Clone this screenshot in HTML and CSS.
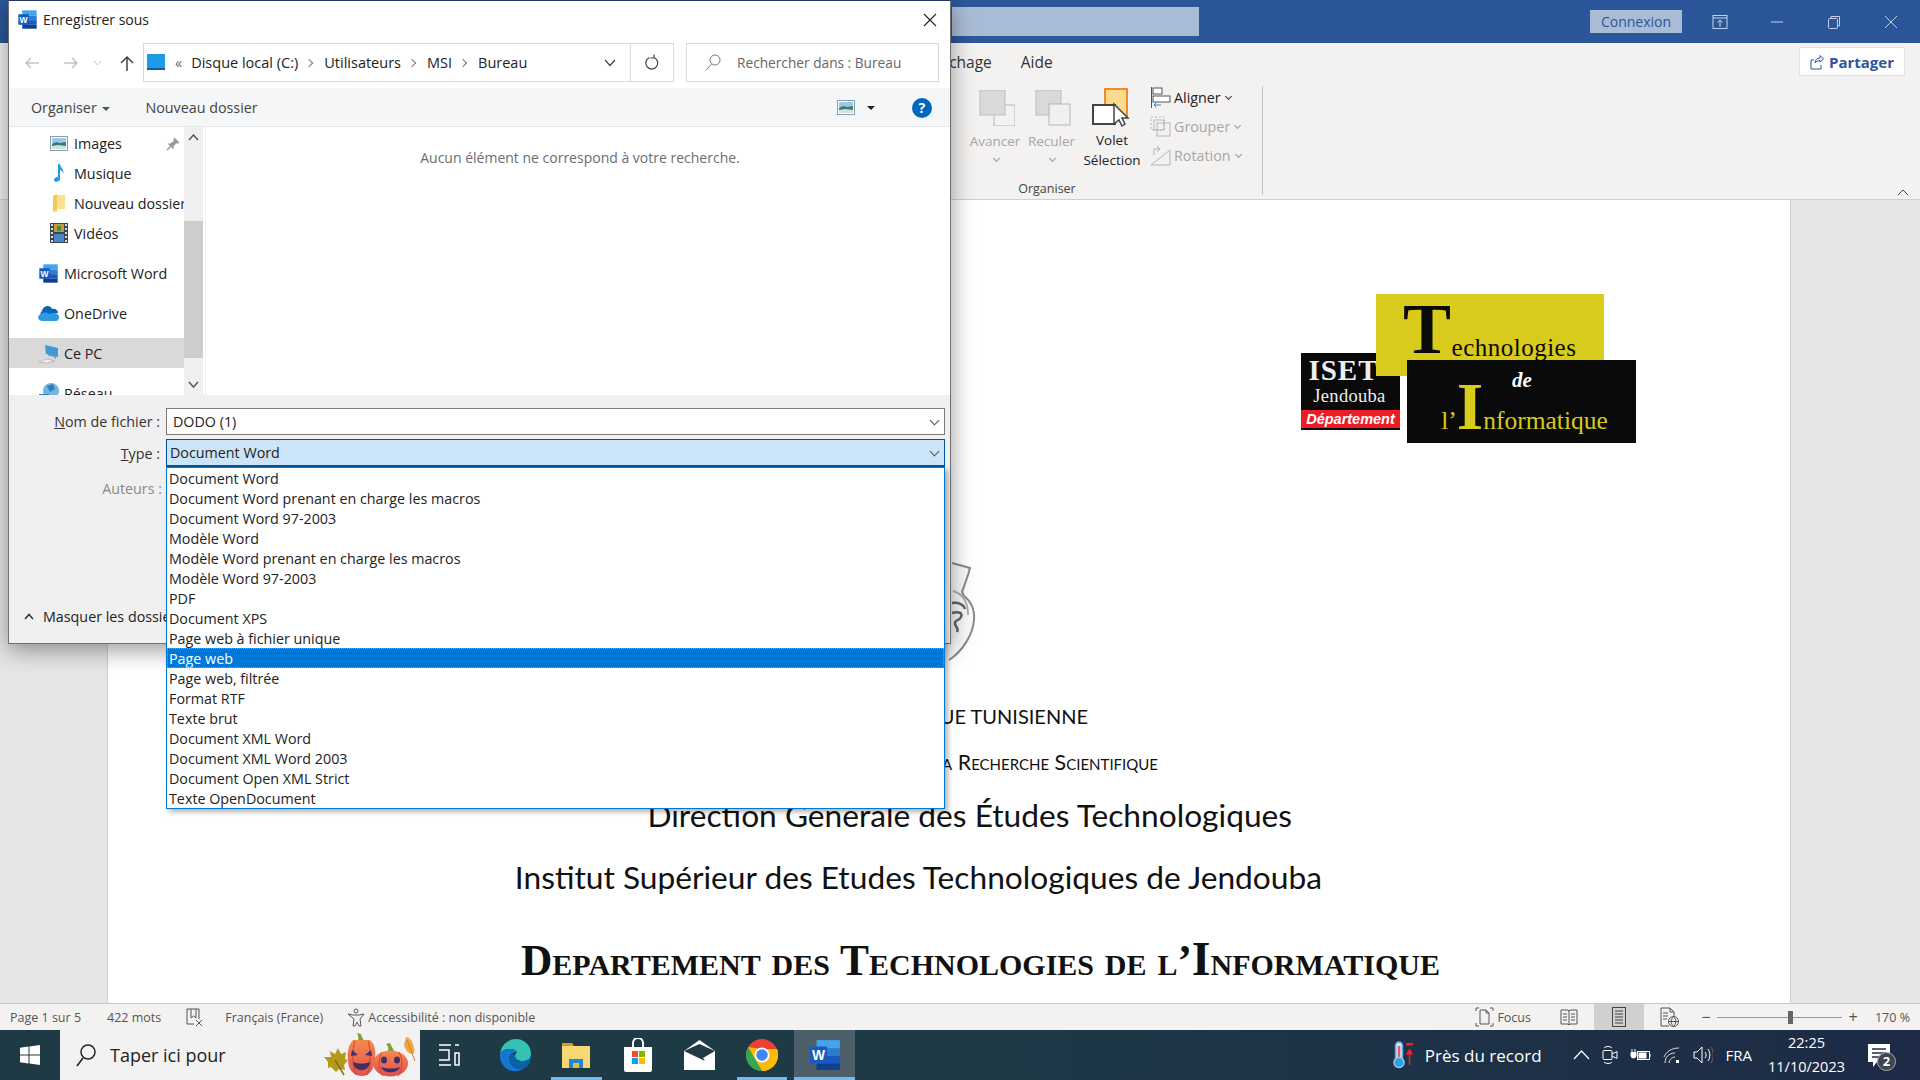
FILE: index.html
```html
<!DOCTYPE html>
<html lang="fr">
<head>
    <meta charset="UTF-8">
    <title>Enregistrer sous</title>
    <link rel="stylesheet" href="styles.css">
</head>
<body>
    <svg class="defs" width="0" height="0">
        <defs>
            <linearGradient id="pumpkin" x1="0" y1="0" x2="0" y2="1">
                <stop offset="0" stop-color="#f58a4e"/>
                <stop offset="1" stop-color="#e2504f"/>
            </linearGradient>
        </defs>
        <symbol id="word" viewBox="0 0 32 32">
            <rect x="8" y="2" width="22" height="8" fill="#41a5ee"/>
            <rect x="8" y="10" width="22" height="7" fill="#2b7cd3"/>
            <rect x="8" y="17" width="22" height="7" fill="#185abd"/>
            <rect x="8" y="24" width="22" height="6" fill="#103f91"/>
            <rect x="2" y="8" width="16" height="16" fill="#185abd"/>
            <text x="10" y="21" text-anchor="middle" font-family="Liberation Sans" font-weight="700" font-size="13" fill="#fff">W</text>
        </symbol>
        <symbol id="picture" viewBox="0 0 18 15">
            <rect x="0.5" y="0.5" width="17" height="14" fill="#fff" stroke="#8a9ba8"/>
            <rect x="2" y="2" width="14" height="6" fill="#9cc8ea"/>
            <path d="M2 8l4-2 4 1 6-1v7H2z" fill="#3d7a6a"/>
            <path d="M2 10l6-1 8 1v3H2z" fill="#cfe0e6"/>
        </symbol>
    </svg>

    <div class="word">
        <header class="titlebar">
            <div class="title-search"></div>
            <button class="login">Connexion</button>
            <div class="win-icons">
                <svg width="16" height="16" viewBox="0 0 16 16" fill="none" stroke="#c5d2e4"><rect x="1" y="1.5" width="14" height="13"/><path d="M1 4h14M8 13V6M5.500 8.500L8 6l2.500 2.500"/></svg>
                <svg width="16" height="16" viewBox="0 0 16 16" stroke="#c5d2e4"><path d="M2 8h12"/></svg>
                <svg width="16" height="16" viewBox="0 0 16 16" fill="none" stroke="#c5d2e4"><rect x="2.500" y="4.500" width="9" height="10" rx="1"/><path d="M5 4V2.500h8.500V12H12"/></svg>
                <svg width="16" height="16" viewBox="0 0 16 16" stroke="#c5d2e4"><path d="M2 2l12 12M14 2L2 14"/></svg>
            </div>
        </header>

        <section class="ribbon">
            <div class="tabs"><span>Affichage</span><span>Aide</span></div>
            <button class="share">
                <svg width="14" height="16" viewBox="0 0 14 16" fill="none" stroke="#2b579a"><path d="M1 6v9h10v-4M1 6h3M5 9c0-3 2-5 5-5V1.500l3.500 3.500L10 8V6.500C8 6.500 6 7.500 5 9z"/></svg>
                Partager
            </button>
            <div class="ribbon-group">
                <div class="ribbon-tools">
                    <div class="tool big disabled">
                        <svg width="36" height="36" viewBox="0 0 36 36"><rect x="15" y="15" width="21" height="21" fill="#f3f2f1" stroke="#b5b5b5"/><rect x="1" y="0" width="25" height="25" fill="#d9d9d9" stroke="#bdbdbd"/></svg>
                        <span>Avancer</span>
                        <i class="chev"></i>
                    </div>
                    <div class="tool big disabled">
                        <svg width="36" height="36" viewBox="0 0 36 36"><rect x="1" y="0" width="25" height="25" fill="#d9d9d9" stroke="#bdbdbd"/><rect x="14" y="14" width="21" height="21" fill="#f0f0f0" stroke="#b5b5b5"/></svg>
                        <span>Reculer</span>
                        <i class="chev"></i>
                    </div>
                    <div class="tool big">
                        <svg width="40" height="40" viewBox="0 0 40 40"><rect x="13" y="1" width="22" height="27" fill="#fbd98d" stroke="#ed8b2f" stroke-width="2"/><rect x="1" y="17" width="22" height="19" fill="#fff" stroke="#444" stroke-width="2"/><path d="M22 16v20l5-4 3 6 3-2-3-6h6z" fill="#fff" stroke="#444" stroke-width="1.500"/></svg>
                        <span>Volet<br>Sélection</span>
                    </div>
                    <div class="tool-stack">
                        <div class="small-tool">
                            <svg width="21" height="21" viewBox="0 0 21 21" fill="none"><path d="M1.500 0v21" stroke="#555"/><rect x="3" y="1" width="9" height="6" stroke="#555" fill="#fff"/><rect x="3" y="9" width="17" height="6" stroke="#555" fill="#fff"/><path d="M11 18H4m2.500-2.500L4 18l2.500 2.500" stroke="#2b88d8"/></svg>
                            Aligner <i class="chev dark"></i>
                        </div>
                        <div class="small-tool disabled">
                            <svg width="21" height="21" viewBox="0 0 21 21" fill="none" stroke="#b5b5b5"><rect x="1" y="1" width="13" height="13" stroke-dasharray="2 2"/><rect x="7" y="7" width="13" height="13"/><rect x="4" y="4" width="10" height="10"/></svg>
                            Grouper <i class="chev"></i>
                        </div>
                        <div class="small-tool disabled">
                            <svg width="21" height="21" viewBox="0 0 21 21" fill="none" stroke="#b5b5b5"><path d="M1 20h19V5zM4 10V4h6M7 1L10 4 7 7"/></svg>
                            Rotation <i class="chev"></i>
                        </div>
                    </div>
                </div>
                <div class="group-name">Organiser</div>
            </div>
            <svg class="collapse" width="12" height="8" viewBox="0 0 12 8" fill="none" stroke="#444"><path d="M1 7l5-5 5 5"/></svg>
        </section>

        <main class="doc-area">
            <article class="page">
                <div class="logo">
                    <div class="logo-iset">
                        <b>ISET</b>
                        <span>Jendouba</span>
                        <em>Département</em>
                    </div>
                    <div class="logo-tech"><b>T</b>echnologies</div>
                    <div class="logo-info">
                        <em>de</em>
                        <p>l’<b>I</b>nformatique</p>
                    </div>
                </div>
                <svg class="emblem" width="60" height="110" viewBox="0 0 60 110" fill="none" stroke="#8a8a8a" stroke-width="2">
                    <path d="M29 8l18 5-2 7-6 17 2 4c7 5 11 14 10 24-1 14-11 31-25 40" fill="#fafafa"/>
                    <path d="M29 48c7-1 12 2 13 6M29 58c7-2 11 0 9 4s-7 3-6 7 4 4 2 8" stroke="#666" stroke-width="2.500"/>
                    <path d="M30 36c10 3 15 12 15 24" stroke="#b0b0b0"/>
                </svg>
                <p class="line line-republic">RÉPUBLIQUE TUNISIENNE</p>
                <p class="line line-ministry">Ministère de l’Enseignement Supérieur et de la Recherche Scientifique</p>
                <p class="line line-direction">Direction Générale des Études Technologiques</p>
                <p class="line line-institut">Institut Supérieur des Etudes Technologiques de Jendouba</p>
                <p class="line line-dept">Departement des Technologies de l’<span>I</span>nformatique</p>
            </article>
        </main>

        <footer class="statusbar">
            <div class="status-left">
                <span>Page 1 sur 5</span>
                <span>422 mots</span>
                <svg width="19" height="19" viewBox="0 0 19 19" fill="none" stroke="#555"><path d="M2 1h12v10M2 1v15h7M6 1v9l2.500-2L11 10V1M11 12l6 6M17 12l-6 6"/></svg>
                <span class="lang">Français (France)</span>
                <span class="access">
                    <svg width="19" height="19" viewBox="0 0 19 19" fill="none" stroke="#555"><circle cx="9" cy="3" r="2"/><path d="M1 6l5 1h6l5-1-4 5 1 7h-2l-2-4-2 4H6l1-7z"/></svg>
                    Accessibilité : non disponible
                </span>
            </div>
            <div class="status-right">
                <span class="focus">
                    <svg width="19" height="20" viewBox="0 0 19 20" fill="none" stroke="#555"><path d="M1 4V1h3M15 1h3v3M1 16v3h3M15 19h3v-3M5 3h6l3 3v11H5zM11 3v3h3"/></svg>
                    Focus
                </span>
                <span class="view">
                    <svg width="18" height="18" viewBox="0 0 18 18" fill="none" stroke="#555"><path d="M1 2h7l1 1 1-1h7v14h-7l-1 1-1-1H1zM9 3v14M3 6h4M3 9h4M3 12h4M11 6h4M11 9h4M11 12h4"/></svg>
                </span>
                <span class="view view-on">
                    <svg width="14" height="20" viewBox="0 0 14 20" fill="none" stroke="#444"><rect x="0.500" y="0.500" width="13" height="19"/><path d="M3 4h8M3 7h8M3 10h8M3 13h8M3 16h8"/></svg>
                </span>
                <span class="view">
                    <svg width="20" height="20" viewBox="0 0 20 20" fill="none" stroke="#555"><path d="M10 19H2V1h9l4 4v5M11 1v4h4M4 6h5M4 9h5M4 12h4"/><circle cx="14.500" cy="14.500" r="5"/><path d="M9.500 14.500h10M14.500 9.500c-3 3-3 7 0 10M14.500 9.500c3 3 3 7 0 10"/></svg>
                </span>
                <div class="zoom">
                    <span class="zoom-sign">−</span>
                    <div class="zoom-track"><i></i></div>
                    <span class="zoom-sign">+</span>
                    <span class="zoom-value">170 %</span>
                </div>
            </div>
        </footer>

        <nav class="taskbar">
            <svg class="start" width="20" height="20" viewBox="0 0 20 20" fill="#fff"><path d="M0 2.800l8.500-1.200v8H0zM9.500 1.400L20 0v9.600H9.500zM0 10.500h8.500v8L0 17.300zM9.500 10.500H20V20L9.500 18.600z"/></svg>
            <div class="task-search">
                <svg width="22" height="24" viewBox="0 0 22 24" fill="none" stroke="#222" stroke-width="1.500"><circle cx="13" cy="9" r="7"/><path d="M8 15l-6 8"/></svg>
                <span>Taper ici pour</span>
                <svg class="pumpkins" width="96" height="46" viewBox="0 0 96 46">
                    <path d="M2 25l7 0-1-6 5 3 3-6 3 6 5-2-1 7 3 1-4 5 1 5-6-1-3 3-5-5-3 1 0-6z" fill="#b39a18"/>
                    <path d="M13 28l9 15" stroke="#8a6d20" stroke-width="1.500"/>
                    <path d="M84 5c4 0 7 5 8 11 1 3 0 6-2 6-3 0-7-4-8-9z" fill="#efa63f"/>
                    <path d="M85 8l8 21" stroke="#c9852f"/>
                    <path d="M36 9c1-3 0-6-1-8l4 1c0 2 2 4 3 7z" fill="#7e9f3a"/>
                    <path d="M31 8h17c5 4 6 11 5 20-1 10-6 16-13 16-8 0-14-6-14-16-1-9 1-16 5-20z" fill="url(#pumpkin)"/>
                    <path d="M33 9c-3 9-3 24 1 34M46 9c3 9 3 24-1 34" stroke="#c9482f" fill="none"/>
                    <path d="M30 18l6 5-7 1zM49 18l-6 5 7 1z" fill="#40306a"/>
                    <path d="M31 30c6 2 11 2 17 0-1 11-16 11-17 0z" fill="#40306a"/>
                    <path d="M66 19c1-3 0-5-2-7l4-1c1 3 3 5 4 8z" fill="#7e9f3a"/>
                    <ellipse cx="68.500" cy="31.500" rx="17.500" ry="13" fill="url(#pumpkin)"/>
                    <path d="M60 20c-4 7-4 17 1 24M77 20c4 7 4 17-1 24" stroke="#c9482f" fill="none"/>
                    <ellipse cx="62" cy="28" rx="3" ry="3.500" fill="#40306a"/>
                    <ellipse cx="75" cy="28" rx="3" ry="3.500" fill="#40306a"/>
                    <path d="M59 35c6 2 13 2 19 0-2 7-17 7-19 0z" fill="#40306a"/>
                </svg>
            </div>
            <div class="task-apps">
                <span class="app">
                    <svg width="22" height="24" viewBox="0 0 22 24" fill="none" stroke="#fff" stroke-width="1.500"><path d="M1 2h12M1 22h12M1 7h10v10H1M17 2v0h4M17 10h4v12h-4z"/></svg>
                </span>
                <span class="app">
                    <svg width="32" height="32" viewBox="0 0 32 32">
                        <path d="M1 15C2 6 9 0 17 0c9 0 15 7 15 15 0 5-4 7-8 7-5 0-8-2-8-5 0-2 1-3 2-4-1-2-4-3-7-3-5 0-9 2-10 5z" fill="#35c1b5"/>
                        <path d="M1 15c1-3 5-5 10-5 3 0 6 1 7 3-6 0-9 5-7 10 2 5 7 8 13 7-3 2-6 2-9 2C7 32 0 24 1 15z" fill="#1378cf"/>
                        <path d="M16 17c0 3 3 5 8 5 4 0 8-2 8-7 1 8-3 13-8 15-6 1-11-2-13-7-1-3 0-7 3-9-1 1 2 1 2 3z" fill="#0d5fa8"/>
                    </svg>
                </span>
                <span class="app active">
                    <svg width="30" height="30" viewBox="0 0 30 30">
                        <path d="M1 3h10l2 3H1z" fill="#d79c1e"/>
                        <rect x="1" y="6" width="28" height="22" fill="#f8d775"/>
                        <path d="M8 28v-9h14v9h-4v-5h-6v5z" fill="#1f88d9"/>
                        <rect x="12" y="23" width="6" height="5" fill="#e9b949"/>
                    </svg>
                </span>
                <span class="app">
                    <svg width="30" height="34" viewBox="0 0 30 34">
                        <path d="M10 9V5a5 5 0 0 1 10 0v4" fill="none" stroke="#fff" stroke-width="2"/>
                        <path d="M1 9h28v23a2 2 0 0 1-2 2H3a2 2 0 0 1-2-2z" fill="#fff"/>
                        <rect x="9" y="13" width="6" height="6" fill="#f25022"/>
                        <rect x="16" y="13" width="6" height="6" fill="#7fba00"/>
                        <rect x="9" y="20" width="6" height="6" fill="#00a4ef"/>
                        <rect x="16" y="20" width="6" height="6" fill="#ffb900"/>
                    </svg>
                </span>
                <span class="app">
                    <svg width="31" height="30" viewBox="0 0 31 30">
                        <path d="M0 11L15.500 0 31 11v19H0z" fill="#fff"/>
                        <path d="M0 11l21 10-2-3 12-7-15.500-7z" fill="#233a44"/>
                        <path d="M21 20l10 9V11z" fill="#fff"/>
                    </svg>
                </span>
                <span class="app active">
                    <svg width="32" height="32" viewBox="0 0 32 32">
                        <circle cx="16" cy="16" r="16" fill="#ea4335"/>
                        <path d="M2 8l8 14 6 10c9 0 16-7 16-16 0-2-.4-4-1-6H16z" fill="#fbbc05"/>
                        <path d="M2.200 8L10 22l6 10C7 32 0 25 0 16c0-3 .8-5.700 2.200-8z" fill="#34a853"/>
                        <path d="M31 10H16l6 12-6 10c9 0 16-7 16-16 0-2-.4-4-1-6z" fill="#fbbc05"/>
                        <circle cx="16" cy="16" r="7.500" fill="#fff"/>
                        <circle cx="16" cy="16" r="5.800" fill="#4285f4"/>
                    </svg>
                </span>
                <span class="app active app-word">
                    <svg width="34" height="34"><use href="#word"/></svg>
                </span>
            </div>
            <div class="tray">
                <svg width="20" height="28" viewBox="0 0 20 28">
                    <rect x="2.500" y="1" width="7" height="20" rx="3.500" fill="#cfe4f7" stroke="#5ba8e6" stroke-width="1.500"/>
                    <path d="M6 5v15" stroke="#e0645a" stroke-width="2.500"/>
                    <circle cx="6" cy="21.500" r="5" fill="#27a0e8" stroke="#93c9f0" stroke-width="1.500"/>
                    <path d="M13 2h7v2.500h-7z" fill="#e8232a"/>
                    <path d="M16.500 24V11M14 13l2.500-4 2.500 4z" stroke="#e8232a" stroke-width="1.500" fill="#e8232a"/>
                </svg>
                <span class="record">Près du record</span>
                <svg class="tray-up" width="17" height="10" viewBox="0 0 17 10" fill="none" stroke="#fff" stroke-width="1.200"><path d="M1 9l7.500-8L16 9"/></svg>
                <svg width="16" height="20" viewBox="0 0 16 20" fill="none" stroke="#fff"><path d="M2 3c2-2 6-2 8 0M2 17c2 2 6 2 8 0"/><rect x="1" y="5.500" width="9" height="9" rx="1"/><path d="M10 9l5-2.500v7L10 11"/></svg>
                <svg width="21" height="12" viewBox="0 0 21 12" fill="none" stroke="#fff"><rect x="7.500" y="2.500" width="12" height="8"/><rect x="9" y="4" width="7" height="5" fill="#fff"/><path d="M20 5v3"/><path d="M1 3.500h5v3a2.500 2.500 0 0 1-5 0zM2 3V0M5 3V0" fill="#fff"/></svg>
                <svg width="18" height="18" viewBox="0 0 18 18" fill="none" stroke="#ddd"><rect x="13" y="14" width="3" height="3" fill="#fff" stroke="none"/><path d="M2 17c0-6 4-10 10-10M6 17c0-3 3-6 6-6M1 11c2-5 7-9 15-9"/></svg>
                <svg width="20" height="20" viewBox="0 0 20 20" fill="none" stroke="#fff"><path d="M1 7h3l5-5v16l-5-5H1zM12 7c1.500 2 1.500 4 0 6M15 4c2.500 4 2.500 8 0 12"/><path d="M18 2c3 5 3 11 0 16" stroke="#667"/></svg>
                <span class="lang-code">FRA</span>
                <div class="clock"><span>22:25</span><span>11/10/2023</span></div>
                <div class="notif">
                    <svg width="22" height="24" viewBox="0 0 22 24"><path d="M0 1h22v18H9l-4 5v-5H0z" fill="#fff"/><path d="M4 6h14M4 10h14M4 14h14" stroke="#1e2c45" stroke-width="1.500"/></svg>
                    <span class="badge">2</span>
                </div>
            </div>
        </nav>
    </div>

    <div class="dialog">
        <div class="dlg-title">
            <svg width="21" height="21"><use href="#word"/></svg>
            <span>Enregistrer sous</span>
            <svg class="dlg-close" width="14" height="14" viewBox="0 0 14 14" stroke="#222" stroke-width="1.100"><path d="M1 1l12 12M13 1L1 13"/></svg>
        </div>
        <div class="dlg-address">
            <div class="dlg-nav">
                <svg width="16" height="14" viewBox="0 0 16 14" fill="none" stroke="#c4c4c4" stroke-width="1.500"><path d="M15 7H2M7 2L2 7l5 5"/></svg>
                <svg width="16" height="14" viewBox="0 0 16 14" fill="none" stroke="#c4c4c4" stroke-width="1.500"><path d="M1 7h13M9 2l5 5-5 5"/></svg>
                <svg width="9" height="6" viewBox="0 0 9 6" fill="none" stroke="#c4c4c4"><path d="M1 1l3.500 4L8 1"/></svg>
                <svg width="14" height="16" viewBox="0 0 14 16" fill="none" stroke="#444" stroke-width="1.500"><path d="M7 16V2M1 8l6-6 6 6"/></svg>
            </div>
            <div class="crumbs">
                <svg width="19" height="19" viewBox="0 0 19 19"><rect x="0" y="1" width="18" height="14" fill="#1e9ae6"/><rect x="0" y="15" width="18" height="2" fill="#0b5ea8"/></svg>
                <span class="crumb-more">«</span>
                <span>Disque local (C:)</span><i class="sep"></i>
                <span>Utilisateurs</span><i class="sep"></i>
                <span>MSI</span><i class="sep"></i>
                <span>Bureau</span>
                <svg class="crumb-chev" width="12" height="8" viewBox="0 0 12 8" fill="none" stroke="#444" stroke-width="1.200"><path d="M1 1l5 5.500L11 1"/></svg>
                <div class="crumb-refresh">
                    <svg width="16" height="17" viewBox="0 0 16 17" fill="none" stroke="#444" stroke-width="1.200"><path d="M10 3.500a6 6 0 1 1-4.500 0M10 .5v3.500h-3.500" /></svg>
                </div>
            </div>
            <div class="dlg-search">
                <svg width="16" height="17" viewBox="0 0 16 17" fill="none" stroke="#777"><circle cx="10" cy="6" r="5"/><path d="M6.500 10L1 16"/></svg>
                <span>Rechercher dans : Bureau</span>
            </div>
        </div>
        <div class="dlg-toolbar">
            <span class="tb-item">Organiser <i class="caret"></i></span>
            <span class="tb-item">Nouveau dossier</span>
            <span class="tb-view">
                <svg width="18" height="15"><use href="#picture"/></svg>
                <i class="caret dark"></i>
            </span>
            <span class="help">?</span>
        </div>
        <div class="dlg-body">
            <div class="nav-pane">
                <ul class="nav-list">
                    <li class="sub">
                        <svg width="18" height="15"><use href="#picture"/></svg>
                        Images
                        <svg class="pin" width="14" height="14" viewBox="0 0 14 14" fill="#999"><path d="M8.500 .5l5 5-1.500 1h-2L7.500 9.500v3L1.500 6.500h3L7.500 4V2z"/><path d="M4.500 9.500L1 13" stroke="#999" stroke-width="1.500"/></svg>
                    </li>
                    <li class="sub">
                        <svg width="18" height="20" viewBox="0 0 18 20"><path d="M8 1h2c0 4 5 5 3 10 0-3-2-4-3-4v9c0 3-6 4-6 1 0-2 2-3 4-3z" fill="#1e9ae6"/></svg>
                        Musique
                    </li>
                    <li class="sub">
                        <svg width="18" height="20" viewBox="0 0 18 20"><path d="M5 2h10v14H5z" fill="#fbe08e"/><path d="M3 3l4-2v17l-4 1z" fill="#f3c95c"/></svg>
                        Nouveau dossier
                    </li>
                    <li class="sub">
                        <svg width="18" height="20" viewBox="0 0 18 20"><rect width="18" height="20" fill="#3a4650"/><rect x="4" y="1" width="10" height="8" fill="#c59a3a"/><rect x="7" y="3" width="4" height="5" fill="#4a8c46"/><rect x="4" y="11" width="10" height="8" fill="#4b86c9"/><path d="M1 2h2M1 6h2M1 10h2M1 14h2M1 18h2M15 2h2M15 6h2M15 10h2M15 14h2M15 18h2" stroke="#ddd" stroke-width="2"/></svg>
                        Vidéos
                    </li>
                    <li class="top gap">
                        <svg width="21" height="21"><use href="#word"/></svg>
                        Microsoft Word
                    </li>
                    <li class="top gap">
                        <svg width="21" height="16" viewBox="0 0 21 16"><path d="M3 11a4 4 0 0 1 1-5c1-5 8-7 10-2 3-1 6 1 6 4z" fill="#0a64b8"/><path d="M4 16c-5 0-5-6-1-7 2-2 6-2 8 0 3-2 10-1 10 3 0 2-1 4-3 4z" fill="#2c9be0"/></svg>
                        OneDrive
                    </li>
                    <li class="top gap selected">
                        <svg width="21" height="24" viewBox="0 0 21 24"><path d="M7 4l13 3v9L8 13z" fill="#3a9bdc"/><path d="M10 14l8 2-1 2" stroke="#7a8a96" fill="none"/><path d="M1 21l8-3 8 2-8 2z" fill="#eee" stroke="#aaa" stroke-width=".7"/></svg>
                        Ce PC
                    </li>
                    <li class="top gap">
                        <svg width="21" height="24" viewBox="0 0 21 24"><circle cx="13" cy="10" r="8" fill="#6fb4e3"/><path d="M9 5l6-2 2 5-5 3zM1 13h10v9H1z" fill="#2e7fc0"/></svg>
                        Réseau
                    </li>
                </ul>
                <div class="nav-scroll">
                    <svg width="11" height="7" viewBox="0 0 11 7" fill="none" stroke="#555" stroke-width="1.500"><path d="M1 6l4.500-5L10 6"/></svg>
                    <div class="nav-thumb"></div>
                    <svg width="11" height="7" viewBox="0 0 11 7" fill="none" stroke="#555" stroke-width="1.500"><path d="M1 1l4.500 5L10 1"/></svg>
                </div>
            </div>
            <div class="results">Aucun élément ne correspond à votre recherche.</div>
        </div>
        <div class="dlg-form">
            <div class="form-row">
                <label><u>N</u>om de fichier :</label>
                <div class="field">DODO (1)<i class="chev"></i></div>
            </div>
            <div class="form-row row-type">
                <label><u>T</u>ype :</label>
                <div class="field field-open">Document Word<i class="chev"></i></div>
            </div>
            <div class="form-row row-author">
                <label class="muted">Auteurs :</label>
            </div>
            <div class="hide-folders">
                <svg width="10" height="7" viewBox="0 0 10 7" fill="none" stroke="#333" stroke-width="1.500"><path d="M1 6l4-4.500L9 6"/></svg>
                Masquer les dossiers
            </div>
        </div>
        <ul class="type-menu">
            <li>Document Word</li>
            <li>Document Word prenant en charge les macros</li>
            <li>Document Word 97-2003</li>
            <li>Modèle Word</li>
            <li>Modèle Word prenant en charge les macros</li>
            <li>Modèle Word 97-2003</li>
            <li>PDF</li>
            <li>Document XPS</li>
            <li>Page web à fichier unique</li>
            <li class="current">Page web</li>
            <li>Page web, filtrée</li>
            <li>Format RTF</li>
            <li>Texte brut</li>
            <li>Document XML Word</li>
            <li>Document XML Word 2003</li>
            <li>Document Open XML Strict</li>
            <li>Texte OpenDocument</li>
        </ul>
    </div>
</body>
</html>
```

FILE: styles.css
```css
:root {
    --word-blue: #2b579a;
    --ribbon: #f3f2f1;
    --text: #222;
    --ui-font: "Open Sans", "Noto Sans", sans-serif;
}

* {
    margin: 0;
    padding: 0;
    box-sizing: border-box;
}

body {
    width: 1920px;
    height: 1080px;
    overflow: hidden;
    position: relative;
    font-family: var(--ui-font);
    font-size: 14.300px;
    color: var(--text);
}

ul {
    list-style: none;
}

button {
    font: inherit;
    border: none;
}

.defs {
    position: absolute;
}

.word {
    display: flex;
    flex-direction: column;
    height: 1080px;
}

/* title bar */
.titlebar {
    height: 43px;
    flex: none;
    background: var(--word-blue);
    display: flex;
    align-items: center;
    justify-content: space-between;
    padding: 0 21px 0 952px;
}

.title-search {
    width: 247px;
    height: 29px;
    margin-top: -1px;
    background: #a9bcd6;
}

.login {
    width: 92px;
    height: 23px;
    margin-left: 391px;
    background: #a9bcd6;
    color: var(--word-blue);
    font-size: 14px;
}

.win-icons {
    display: flex;
    gap: 41px;
    margin-left: 30px;
}

/* ribbon */
.ribbon {
    height: 157px;
    flex: none;
    position: relative;
    background: var(--ribbon);
    border-bottom: 1px solid #d2d0ce;
}

.tabs {
    position: absolute;
    left: 925px;
    top: 8px;
    display: flex;
    gap: 29px;
    font-size: 15.500px;
    color: #333;
}

.share {
    position: absolute;
    left: 1799px;
    top: 4px;
    width: 106px;
    height: 29px;
    display: flex;
    align-items: center;
    justify-content: center;
    gap: 5px;
    background: #fff;
    border: 1px solid #e1dfdd;
    border-radius: 2px;
    color: var(--word-blue);
    font-weight: 700;
    font-size: 15px;
}

.ribbon-group {
    position: absolute;
    left: 965px;
    top: 43px;
    width: 298px;
    height: 109px;
    border-right: 1px solid #c8c6c4;
    display: flex;
    flex-direction: column;
}

.ribbon-tools {
    display: flex;
    height: 94px;
}

.tool {
    display: flex;
    flex-direction: column;
    align-items: center;
    font-size: 13.500px;
    line-height: 20px;
    text-align: center;
    white-space: nowrap;
}

.tool.big {
    width: 60px;
    padding-top: 4px;
}

.tool.big svg {
    margin-bottom: 5px;
    margin-left: 3px;
    flex: none;
}

.tool:nth-child(2) {
    width: 53px;
}

.tool:nth-child(3) {
    width: 66px;
    margin-left: 1px;
    margin-right: 3px;
    padding-top: 2px;
}

.tool:nth-child(3) svg {
    margin-bottom: 2px;
    margin-left: 0;
}

.disabled {
    color: #a6a6a6;
}

.tool-stack {
    display: flex;
    flex-direction: column;
    gap: 8px;
    margin-left: 2px;
    padding-top: 1px;
}

.small-tool {
    height: 21px;
    display: flex;
    align-items: center;
    gap: 3px;
    font-size: 14.300px;
    white-space: nowrap;
}

.chev {
    display: inline-block;
    width: 5px;
    height: 5px;
    margin: 0 0 3px 2px;
    border-right: 1px solid #999;
    border-bottom: 1px solid #999;
    transform: rotate(45deg);
}

.chev.dark {
    border-color: #333;
}

.tool .chev {
    margin-top: 5px;
}

.group-name {
    width: 164px;
    margin-top: 10px;
    text-align: center;
    font-size: 12.500px;
    color: #444;
}

.collapse {
    position: absolute;
    left: 1897px;
    top: 145px;
}

/* document */
.doc-area {
    flex: 1;
    min-height: 0;
    background: #e6e6e6;
    padding-left: 107px;
    padding-right: 129px;
    overflow: hidden;
}

.page {
    position: relative;
    height: 100%;
    background: #fff;
    border-left: 1px solid #cfcfcf;
    border-right: 1px solid #cfcfcf;
    padding-top: 502px;
    font-family: Lato, "Open Sans", sans-serif;
    color: #111;
    white-space: nowrap;
}

.line {
    text-align: right;
}

.line-republic {
    font-size: 20px;
    line-height: 28px;
    padding-right: 702px;
}

.line-ministry {
    margin-top: 18px;
    font-size: 21.400px;
    line-height: 28px;
    font-variant: small-caps;
    padding-right: 632px;
}

.line-direction {
    margin-top: 20px;
    font-size: 31.700px;
    line-height: 38px;
    padding-right: 498px;
}

.line-institut {
    margin-top: 24px;
    font-size: 31.700px;
    line-height: 38px;
    padding-right: 468px;
}

.line-dept {
    margin-top: 37px;
    font-family: "Liberation Serif", serif;
    font-weight: 700;
    font-size: 43.400px;
    line-height: 52px;
    font-variant: small-caps;
    padding-right: 350px;
}

.line-dept span {
    font-size: 48px;
}

.emblem {
    position: absolute;
    left: 815px;
    top: 355px;
}

/* logo in the document header */
.logo {
    position: absolute;
    left: 1193px;
    top: 93px;
    width: 336px;
    height: 150px;
    font-family: "Liberation Serif", serif;
}

.logo-iset {
    position: absolute;
    left: 0;
    top: 60px;
    width: 99px;
    height: 77px;
    background: #0a0a0a;
    color: #eee;
    display: flex;
    flex-direction: column;
    align-items: center;
}

.logo-iset b {
    font-size: 29px;
    line-height: 34px;
    margin-right: 14px;
    letter-spacing: 1px;
}

.logo-iset span {
    font-size: 18.500px;
    line-height: 21px;
    margin-top: -1px;
    margin-right: 2px;
    letter-spacing: .3px;
}

.logo-iset em {
    width: 100%;
    height: 18px;
    margin-top: 3px;
    background: #ee1c25;
    color: #fff;
    font-family: "Liberation Sans", sans-serif;
    font-size: 14.500px;
    font-weight: 700;
    line-height: 18px;
    text-align: center;
}

.logo-tech {
    position: absolute;
    left: 75px;
    top: 1px;
    width: 228px;
    height: 82px;
    padding: 14px 0 0 27px;
    background: #d9cb1b;
    color: #0a0a0a;
    font-size: 25px;
    letter-spacing: .5px;
    line-height: 62px;
}

.logo-tech b {
    position: relative;
    top: -3px;
    font-size: 72px;
    line-height: 48px;
}

.logo-info {
    position: absolute;
    left: 106px;
    top: 67px;
    width: 229px;
    height: 83px;
    background: #0a0a0a;
    color: #d9cb1b;
    text-align: center;
    font-size: 25.500px;
}

.logo-info em {
    display: block;
    margin: 11px 0 0 1px;
    color: #fff;
    font-weight: 700;
    font-size: 21px;
    line-height: 18px;
}

.logo-info p {
    margin-top: -3px;
    line-height: 43px;
    padding-left: 6px;
}

.logo-info b {
    font-size: 68px;
    font-weight: 700;
    line-height: 40px;
}

/* status bar */
.statusbar {
    height: 27px;
    flex: none;
    background: var(--ribbon);
    border-top: 1px solid #c8c6c4;
    display: flex;
    justify-content: space-between;
    align-items: center;
    font-size: 12.500px;
    color: #555;
    padding-left: 10px;
    padding-right: 10px;
}

.status-left,
.status-right {
    display: flex;
    align-items: center;
    height: 100%;
}

.status-left span {
    white-space: nowrap;
}

.status-left > span:nth-child(2) {
    margin: 0 24px 0 26px;
}

.lang {
    margin-left: 21px;
}

.access {
    display: flex;
    align-items: center;
    gap: 2px;
    margin-left: 24px;
}

.focus {
    display: flex;
    align-items: center;
    gap: 3px;
}

.view {
    width: 50px;
    height: 100%;
    display: flex;
    align-items: center;
    justify-content: center;
}

.focus + .view {
    margin-left: 13px;
}

.view:nth-child(3) {
    background: #d2d0ce;
}

.zoom {
    display: flex;
    align-items: center;
    margin-left: 6px;
}

.zoom-sign {
    width: 12px;
    font-size: 16px;
    text-align: center;
}

.zoom-track {
    position: relative;
    width: 125px;
    height: 1px;
    margin: 0 5px;
    background: #999;
}

.zoom-track i {
    position: absolute;
    left: 71px;
    top: -6px;
    width: 5px;
    height: 13px;
    background: #666;
}

.zoom-value {
    margin-left: 16px;
}

/* taskbar */
.taskbar {
    height: 50px;
    flex: none;
    display: flex;
    align-items: center;
    background: linear-gradient(90deg, #1f3a45, #1e3a46 45%, #1d2b46);
    color: #fff;
}

.start {
    margin: 0 20px;
    flex: none;
}

.task-search {
    position: relative;
    width: 360px;
    height: 50px;
    flex: none;
    display: flex;
    align-items: center;
    gap: 13px;
    padding-left: 15px;
    background: #f2f2f2;
    color: #222;
    font-size: 18px;
}

.pumpkins {
    position: absolute;
    right: 2px;
    top: 2px;
}

.task-apps {
    display: flex;
    align-items: center;
    margin-left: 8px;
    height: 100%;
}

.app {
    position: relative;
    width: 50.500px;
    height: 100%;
    display: flex;
    align-items: center;
    justify-content: center;
    flex: none;
    margin-right: 11px;
}

.app:first-child {
    padding-right: 8px;
}

.app:last-child {
    margin-right: 0;
    width: 61px;
}

.app:nth-child(5) {
    margin-right: 12px;
}

.app:nth-child(6) {
    margin-right: 7px;
}

.app.active::after {
    content: "";
    position: absolute;
    left: 0;
    right: 0;
    bottom: 0;
    height: 3px;
    background: #76b9ed;
}

.app-word {
    background: #4d5f68;
}

.tray {
    display: flex;
    align-items: center;
    margin-left: auto;
    height: 100%;
    padding-right: 30px;
    gap: 12px;
}

.record {
    margin-right: 19px;
    font-size: 17px;
    white-space: nowrap;
}

.lang-code {
    margin-left: 1px;
    font-size: 15px;
}

.clock {
    display: flex;
    flex-direction: column;
    align-items: center;
    gap: 4px;
    margin-left: 4px;
    font-size: 14.500px;
    line-height: 20px;
}

.notif {
    position: relative;
    margin-left: 11px;
    height: 24px;
}

.badge {
    position: absolute;
    left: 9px;
    top: 9px;
    width: 19px;
    height: 19px;
    border-radius: 50%;
    background: #3d4550;
    border: 1px solid #aaa;
    text-align: center;
    font-size: 13px;
    font-weight: 700;
    line-height: 17px;
}

/* save dialog */
.dialog {
    position: absolute;
    left: 8px;
    top: 0;
    width: 943px;
    height: 644px;
    background: #fff;
    border: 1px solid #707070;
    border-top-color: #1d3a66;
    box-shadow: 0 6px 22px rgba(0, 0, 0, .4);
    display: flex;
    flex-direction: column;
}

.dlg-title {
    height: 42px;
    flex: none;
    display: flex;
    align-items: center;
    gap: 5px;
    padding: 0 13px 5px 8px;
    font-size: 14px;
}

.dlg-close {
    margin-left: auto;
}

.dlg-address {
    height: 39px;
    flex: none;
    display: flex;
}

.dlg-nav {
    width: 134px;
    display: flex;
    align-items: center;
    padding-left: 15px;
}

.dlg-nav svg:nth-child(2) {
    margin-left: 23px;
}

.dlg-nav svg:nth-child(3) {
    margin-left: 14px;
}

.dlg-nav svg:nth-child(4) {
    margin-left: 18px;
}

.crumbs {
    width: 531px;
    display: flex;
    align-items: center;
    padding-left: 3px;
    border: 1px solid #d9d9d9;
    white-space: nowrap;
    font-size: 14.500px;
}

.crumb-more {
    margin: 0 9px 0 9px;
    color: #666;
}

.sep {
    width: 6px;
    height: 6px;
    margin: 0 12px 0 8px;
    border-top: 1px solid #777;
    border-right: 1px solid #777;
    transform: rotate(45deg);
}

.crumb-chev {
    margin-left: auto;
}

.crumb-refresh {
    width: 43px;
    height: 100%;
    margin-left: 14px;
    display: flex;
    align-items: center;
    justify-content: center;
    border-left: 1px solid #d9d9d9;
}

.dlg-search {
    width: 253px;
    margin-left: 12px;
    display: flex;
    align-items: center;
    gap: 16px;
    padding-left: 18px;
    border: 1px solid #d9d9d9;
    color: #666;
    font-size: 13.700px;
    white-space: nowrap;
}

.dlg-toolbar {
    height: 39px;
    margin-top: 6px;
    flex: none;
    display: flex;
    align-items: center;
    padding: 1px 18px 0 22px;
    background: #f5f6f7;
    border-bottom: 1px solid #e5e5e5;
    color: #444;
}

.tb-item {
    margin-right: 35px;
    white-space: nowrap;
}

.caret {
    display: inline-block;
    margin-left: 2px;
    vertical-align: middle;
    border: 4px solid transparent;
    border-top-color: #555;
    border-bottom: 0;
}

.caret.dark {
    margin-left: 12px;
    border-top-color: #222;
}

.tb-view {
    margin-left: auto;
    display: flex;
    align-items: center;
}

.help {
    width: 20px;
    height: 20px;
    margin-left: 37px;
    border-radius: 50%;
    background: #0067c0;
    color: #fff;
    font-weight: 700;
    text-align: center;
    line-height: 20px;
}

.dlg-body {
    height: 268px;
    flex: none;
    display: flex;
    background: #fff;
    overflow: hidden;
}

.nav-pane {
    width: 197px;
    flex: none;
    display: flex;
    border-right: 1px solid #f0f0f0;
}

.nav-list {
    width: 175px;
    flex: none;
    padding-top: 1px;
    white-space: nowrap;
}

.nav-list li {
    height: 30px;
    display: flex;
    align-items: center;
    position: relative;
    overflow: hidden;
}

.nav-list svg {
    flex: none;
}

.nav-list .sub {
    padding-left: 41px;
    gap: 6px;
}

.nav-list .top {
    padding-left: 29px;
    gap: 5px;
}

.nav-list .gap {
    margin-top: 10px;
}

.nav-list .selected {
    background: #d9d9d9;
}

.pin {
    position: absolute;
    left: 157px;
    top: 9px;
}

.nav-scroll {
    width: 19px;
    flex: none;
    display: flex;
    flex-direction: column;
    align-items: center;
    justify-content: space-between;
    background: #f0f0f0;
    padding: 7px 0;
    position: relative;
}

.nav-thumb {
    position: absolute;
    left: 0;
    top: 94px;
    width: 100%;
    height: 137px;
    background: #cdcdcd;
}

.results {
    flex: 1;
    text-align: center;
    padding: 21px 0 0 4px;
    color: #6d6d6d;
    font-size: 14px;
}

.dlg-form {
    flex: 1;
    padding-top: 13px;
    background: #f0f0f0;
    position: relative;
}

.form-row {
    display: flex;
    align-items: center;
    height: 27px;
    margin-bottom: 4px;
}

.row-type {
    height: 28px;
}

.form-row label {
    width: 152px;
    padding-right: 1px;
    text-align: right;
    color: #333;
    white-space: nowrap;
}

.muted {
    color: #8a8a8a !important;
}

.row-author {
    margin-top: 8px;
}

.row-author label {
    width: 154px;
}

.field {
    flex: none;
    width: 779px;
    height: 100%;
    margin-left: 5px;
    display: flex;
    align-items: center;
    justify-content: space-between;
    padding: 0 6px;
    background: #fff;
    border: 1px solid #7a7a7a;
}

.field .chev {
    border-color: #555;
    width: 7px;
    height: 7px;
}

.field-open {
    padding-left: 3px;
    background: #cce4f7;
    border-color: #005499;
    border-bottom-width: 2px;
}

.hide-folders {
    position: absolute;
    left: 15px;
    top: 212px;
    display: flex;
    align-items: center;
    gap: 9px;
    white-space: nowrap;
}

.type-menu {
    position: absolute;
    left: 157px;
    top: 466px;
    width: 779px;
    height: 342px;
    background: #fff;
    border: 1px solid #0078d7;
    box-shadow: 3px 3px 5px rgba(0, 0, 0, .3);
    z-index: 2;
}

.type-menu li {
    height: 20px;
    line-height: 22px;
    padding-left: 2px;
    white-space: nowrap;
}

.type-menu .current {
    background: #0078d7;
    color: #fff;
    outline: 1px dotted #d98a3a;
    outline-offset: -1px;
}
```
